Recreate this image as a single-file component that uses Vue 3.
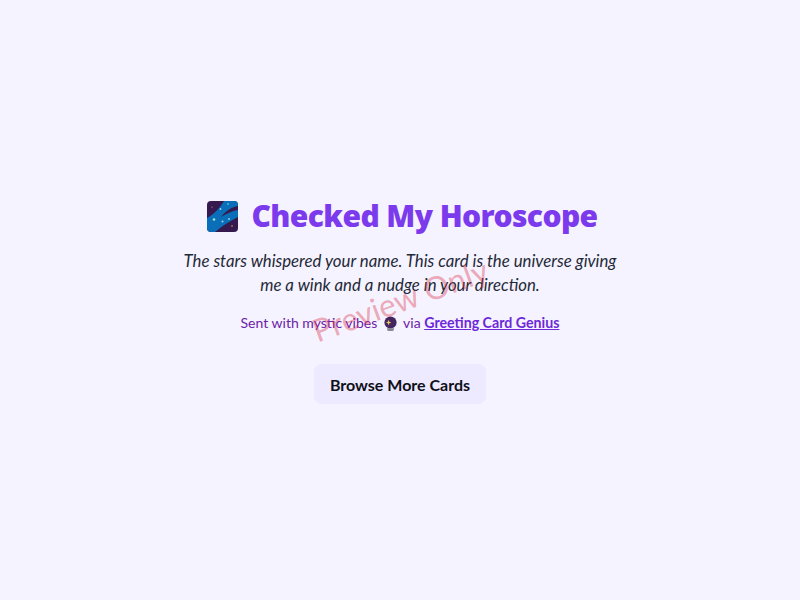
<script setup>
const stars = [
  { cx: 7, cy: 18.5, r: 1.3, fill: '#9fe8c8' },
  { cx: 13.5, cy: 8, r: 0.9, fill: '#8fd8ee' },
  { cx: 21, cy: 3, r: 0.8, fill: '#8fd8ee' },
  { cx: 15.5, cy: 20.5, r: 1, fill: '#8fd8ee' },
  { cx: 22, cy: 18, r: 0.9, fill: '#8fd8ee' },
  { cx: 25, cy: 25, r: 0.7, fill: '#e8c95a' },
  { cx: 5, cy: 6, r: 0.5, fill: '#e8c95a' }
]
</script>

<template>
  <main class="page">
    <h1 class="title">
      <svg class="galaxy" viewBox="0 0 31 31" aria-hidden="true">
        <rect width="31" height="31" rx="4" fill="#35194f" />
        <path d="M0 17C7 13 13 7 17 0H27A4 4 0 0 1 31 4V16C23 20 15 25 8 31H4A4 4 0 0 1 0 27Z" fill="#0a6fb8" />
        <path d="M31 5C24 6 18 11 14 16C19 13 25 10 31 9Z" fill="#35194f" />
        <circle v-for="(s, i) in stars" :key="i" :cx="s.cx" :cy="s.cy" :r="s.r" :fill="s.fill" />
      </svg>
      <span>Checked My Horoscope</span>
    </h1>
    <p class="message">The stars whispered your name. This card is the universe giving me a wink and a nudge in your direction.</p>
    <p class="sent">
      Sent with mystic vibes
      <svg class="ball" viewBox="0 0 16 16" aria-hidden="true">
        <circle cx="8" cy="7" r="6.5" fill="#43265f" />
        <path d="M6 4L6.8 6.2L9 7L6.8 7.8L6 10L5.2 7.8L3 7L5.2 6.2Z" fill="#e8c95a" />
        <path d="M4 13H12L11 16H5Z" fill="#8a8794" />
      </svg>
      via <a class="link" href="#">Greeting Card Genius</a>
    </p>
    <a class="button" href="#">Browse More Cards</a>
    <div class="watermark">Preview Only</div>
  </main>
</template>

<style>
html, body { margin: 0; background: #f5f3ff; }
</style>

<style scoped>
.page {
  position: relative;
  box-sizing: border-box;
  height: 600px;
  display: flex;
  flex-direction: column;
  align-items: center;
  justify-content: center;
  text-align: center;
  font-family: "Lato", sans-serif;
  background: #f5f3ff;
}
.title {
  display: flex;
  align-items: center;
  gap: 13px;
  margin: 0 0 13px;
  padding-left: 5px;
  font-family: "Noto Sans", sans-serif;
  font-size: 30px;
  line-height: 40px;
  font-weight: 900;
  letter-spacing: -0.6px;
  color: #7c3aed;
}
.galaxy { width: 31px; height: 31px; }
.message {
  width: 440px;
  margin: 0 0 15px;
  font-size: 16.8px;
  line-height: 24px;
  font-style: italic;
  color: #1f2937;
}
.sent {
  margin: 0 0 30px;
  font-size: 14px;
  line-height: 22px;
  color: #6b21a8;
}
.ball { width: 15px; height: 15px; margin: 0 2px; vertical-align: -3px; }
.link { color: #6d28d9; font-size: 14.2px; font-weight: 700; text-decoration: underline; }
.button {
  padding: 11px 16px 9px;
  border-radius: 8px;
  background: #ede9fe;
  color: #0f0f1a;
  font-size: 16px;
  line-height: 20px;
  font-weight: 700;
  text-decoration: none;
}
.watermark {
  position: absolute;
  left: 50%;
  top: 50%;
  transform: translate(-50%, -50%) rotate(-20deg);
  font-size: 31.5px;
  color: rgba(220, 50, 70, 0.4);
  white-space: nowrap;
  pointer-events: none;
}
</style>
